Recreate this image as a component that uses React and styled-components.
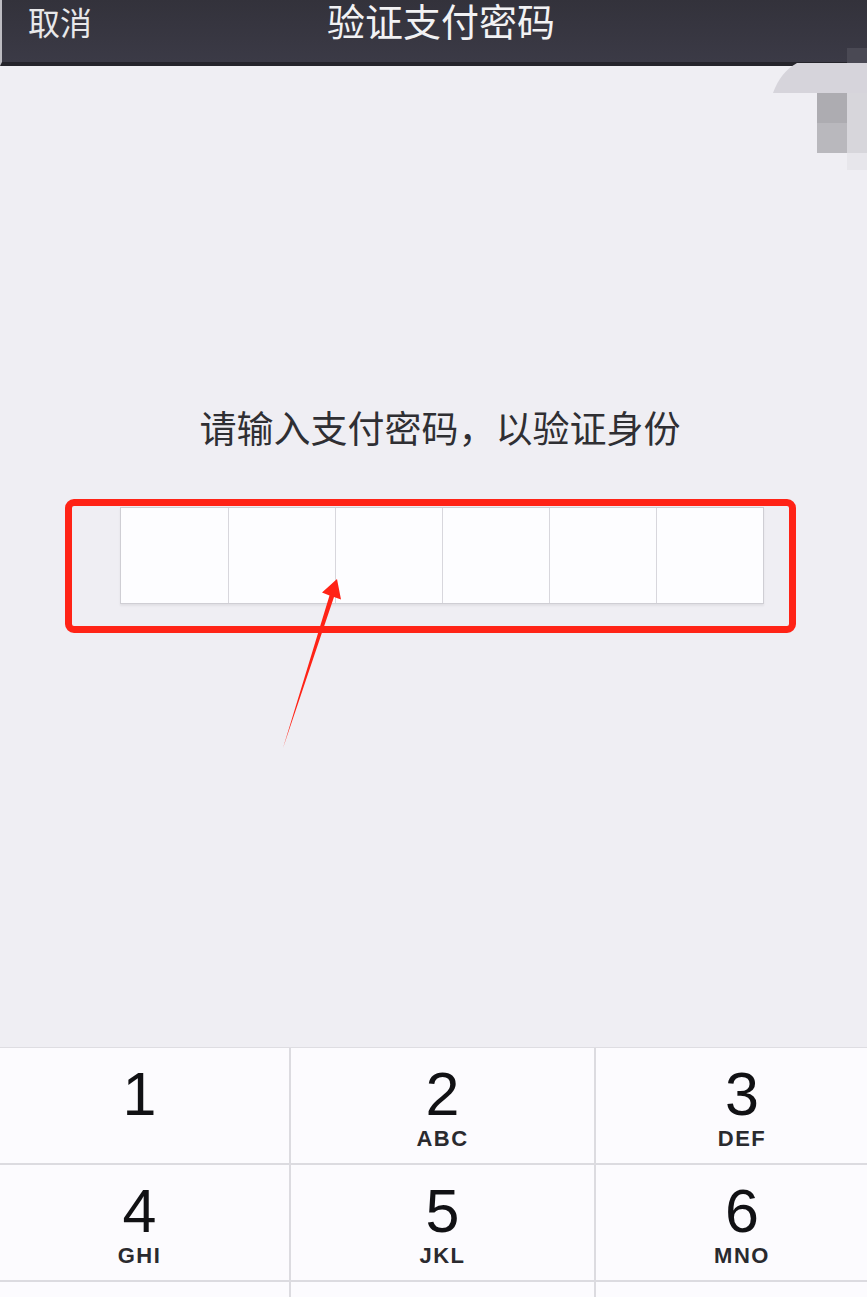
import React from "react"
import styled, { createGlobalStyle } from "styled-components"

const GlobalStyle = createGlobalStyle`
  html, body {
    margin: 0;
    padding: 0;
    background: #efeef3;
    overflow: hidden;
  }
`

const CJK = `"Noto Sans CJK SC", "Noto Sans", sans-serif`

const Page = styled.div`
  position: relative;
  width: 867px;
  height: 1297px;
  display: flex;
  flex-direction: column;
  overflow: hidden;
  background: #efeef3;
`

const Header = styled.header`
  height: 62px;
  flex-shrink: 0;
  display: grid;
  grid-template-columns: 1fr auto 1fr;
  align-items: start;
  padding-left: 13px;
  background: linear-gradient(#33323b, #3b3a46);
  border-bottom: 4px solid #25242b;
  border-left: 2px solid #bdbcc2;
  box-sizing: content-box;
`

const Cancel = styled.span`
  justify-self: start;
  margin: 5px 0 0 13px;
  font-family: ${CJK};
  font-size: 32px;
  line-height: 1;
  color: #e8e8ea;
`

const Title = styled.h1`
  margin: 1px 0 0;
  font-family: ${CJK};
  font-size: 38px;
  font-weight: 400;
  line-height: 1;
  color: #f2f2f4;
`

const Main = styled.main`
  flex: 1;
  display: flex;
  flex-direction: column;
  align-items: center;
  padding: 343px 0 0 13px;
`

const Prompt = styled.p`
  margin: 0;
  font-family: ${CJK};
  font-size: 37px;
  line-height: 1;
  color: #2f2f33;
`

const BoxWrap = styled.div`
  position: relative;
  margin-top: 61px;
  margin-left: 4px;
`

const PinBox = styled.div`
  display: grid;
  grid-template-columns: repeat(6, 107px);
  height: 95px;
  background: #fdfdff;
  border: 1px solid #cfced4;
  box-shadow: 0 2px 2px rgba(0, 0, 0, 0.06);
`

const PinCell = styled.div`
  border-left: ${(p) => (p.first ? "none" : "1px solid #d8d7dd")};
`

const Highlight = styled.div`
  position: absolute;
  left: -55px;
  top: -8px;
  width: 717px;
  height: 120px;
  border: 7px solid #ff2316;
  border-radius: 9px;
`

const Arrow = styled.svg`
  position: absolute;
  left: 270px;
  top: 570px;
  width: 80px;
  height: 190px;
`

const Blur = styled.svg`
  position: absolute;
  left: 770px;
  top: 44px;
  width: 97px;
  height: 130px;
`

const Keypad = styled.div`
  flex-shrink: 0;
  height: 249px;
  width: 898px;
  margin-left: -10px;
  display: grid;
  grid-template-columns: 299px 305px 294px;
  grid-auto-rows: 117px;
  background: #fcfbfe;
  border-top: 1px solid #dedde2;
  overflow: hidden;
`

const Key = styled.div`
  display: flex;
  flex-direction: column;
  align-items: center;
  padding-top: 16px;
  border-bottom: 2px solid #dcdbe0;
  border-left: ${(p) => (p.col === 0 ? "none" : "2px solid #dcdbe0")};
  box-sizing: border-box;
`

const Digit = styled.span`
  font-family: "Liberation Sans", Arial, sans-serif;
  font-size: 61px;
  line-height: 1;
  color: #111114;
`

const Letters = styled.span`
  margin-top: 3px;
  font-family: "Liberation Sans", Arial, sans-serif;
  font-size: 22px;
  font-weight: 700;
  letter-spacing: 1.5px;
  line-height: 1;
  color: #2a2a2e;
`

// third row is only peeking in at the bottom edge, so its labels stay out of view
const keys = [
  ["1", ""], ["2", "ABC"], ["3", "DEF"],
  ["4", "GHI"], ["5", "JKL"], ["6", "MNO"],
  ["", ""], ["", ""], ["", ""],
]

export default function App() {
  return (
    <Page>
      <GlobalStyle />
      <Header>
        <Cancel>取消</Cancel>
        <Title>验证支付密码</Title>
      </Header>

      <Main>
        <Prompt>请输入支付密码，以验证身份</Prompt>
        <BoxWrap>
          <PinBox>
            {[0, 1, 2, 3, 4, 5].map((i) => (
              <PinCell key={i} first={i === 0} />
            ))}
          </PinBox>
          <Highlight />
        </BoxWrap>
      </Main>

      <Keypad>
        {keys.map(([d, l], i) => (
          <Key key={i} col={i % 3}>
            {d && <Digit>{d}</Digit>}
            {l && <Letters>{l}</Letters>}
          </Key>
        ))}
      </Keypad>

      <Arrow viewBox="0 0 80 190">
        <polygon
          points="13,178 59.5,25.5 52,22.5 67,9 71,29.5 64,27"
          fill="#ff2316"
        />
      </Arrow>

      <Blur viewBox="0 0 97 130">
        <rect x="77" y="4" width="20" height="15" fill="#4a4954" />
        <path d="M3 49 C8 35 16 25 27 19 L97 19 L97 49 Z" fill="#d6d4db" />
        <rect x="47" y="49" width="30" height="30" fill="#adacb1" />
        <rect x="47" y="79" width="30" height="30" fill="#b9b8bd" />
        <rect x="77" y="49" width="20" height="60" fill="#d7d6db" />
        <rect x="77" y="109" width="20" height="17" fill="#e7e6eb" />
      </Blur>
    </Page>
  )
}
